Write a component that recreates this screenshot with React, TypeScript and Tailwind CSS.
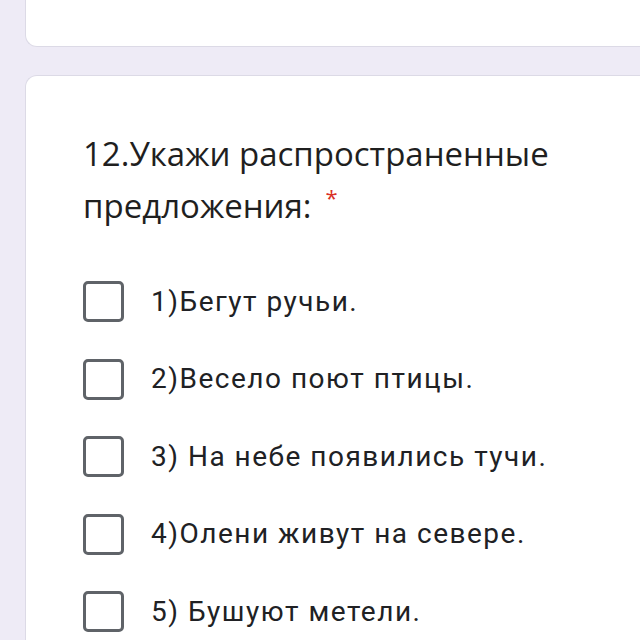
import React from "react";

const options = [
  "1)Бегут ручьи.",
  "2)Весело поют птицы.",
  "3) На небе появились тучи.",
  "4)Олени живут на севере.",
  "5) Бушуют метели.",
];

export default function App() {
  return (
    <div className="w-[640px] h-[640px] overflow-hidden bg-[#eeebf6] flex flex-col">
      <div className="ml-[25px] w-[700px] h-[47px] shrink-0 bg-white rounded-bl-[12px] border-l border-b border-[#dcdae6]" />
      <div className="ml-[25px] mt-[28px] w-[700px] h-[600px] shrink-0 bg-white rounded-tl-[12px] border-l border-t border-[#dcdae6] pl-[57px] pt-[52px]">
        <div
          className="text-[33px] leading-[52px] text-[#1f1f1f] w-[490px]"
          style={{ fontFamily: "'Open Sans', sans-serif" }}
        >
          12.Укажи распространенные предложения:
          <span className="inline-block align-top leading-none mt-[6px] text-[#d93025] text-[22px] ml-[14px]">*</span>
        </div>
        <div className="mt-[49px] flex flex-col gap-[36.5px]" style={{ fontFamily: "Roboto, sans-serif" }}>
          {options.map((o) => (
            <div key={o} className="flex items-center h-[41px]">
              <div className="w-[41px] h-[41px] rounded-[5px] border-[3px] border-[#5f6368] shrink-0" />
              <span className="ml-[27px] text-[28px] text-[#202124] tracking-[1.5px]">{o}</span>
            </div>
          ))}
        </div>
      </div>
    </div>
  );
}
